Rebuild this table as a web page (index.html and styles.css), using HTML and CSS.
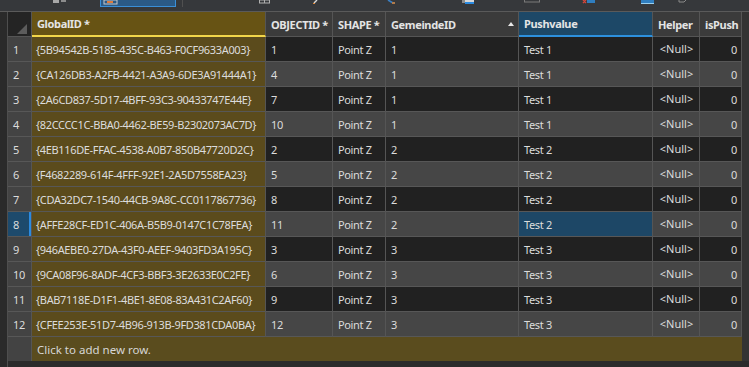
FILE: index.html
```html
<!DOCTYPE html>
<html>

<head>
  <meta charset="utf-8" />
  <title>Attributes - Gemeinden</title>
  <link rel="stylesheet" href="styles.css">
</head>

<body>
  <div class="toolbar">
    <svg class="tool t-add" width="16" height="5"><rect x="2" y="0" width="6" height="3" fill="#a8a8a8"/><rect x="10" y="0" width="5" height="2" fill="#8c8c8c"/></svg>
    <div class="tool-btn active">
      <svg width="16" height="6"><rect x="1" y="0" width="13" height="4" fill="none" stroke="#c8c8c8" stroke-width="1"/><rect x="4" y="1" width="6" height="2" fill="#e07a3a"/></svg>
    </div>
    <span class="sep"></span>
    <svg class="tool t-grid" width="11" height="5"><rect x="0.5" y="0" width="10" height="3" fill="none" stroke="#b0b0b0"/><line x1="5.5" y1="0" x2="5.5" y2="3" stroke="#b0b0b0"/></svg>
    <svg class="tool t-pen" width="5" height="5"><line x1="4" y1="0" x2="1" y2="3" stroke="#d8d8d8" stroke-width="1.4"/><rect x="0" y="3" width="2" height="1" fill="#e08a3a"/></svg>
    <svg class="tool t-zoom" width="11" height="5"><line x1="3" y1="0" x2="8" y2="3" stroke="#3a7fc2" stroke-width="1.6"/><rect x="7" y="2" width="3" height="2" fill="#b07a4a"/></svg>
    <svg class="tool t-sel" width="12" height="5"><rect x="0" y="0" width="3" height="3" fill="#8a8a8a"/><rect x="3" y="0" width="9" height="3" fill="#d8d8d8"/><rect x="3" y="2" width="9" height="2" fill="#2a8ae0"/></svg>
    <svg class="tool t-clear" width="16" height="5"><rect x="0.5" y="-1" width="15" height="3" fill="none" stroke="#7a7a7a"/></svg>
    <svg class="tool t-del" width="13" height="5"><rect x="5" y="0" width="8" height="3" fill="#2f7ec0"/><path d="M1 0 L4 3 M4 0 L1 3" stroke="#d4463a" stroke-width="1.4"/></svg>
    <svg class="tool t-copy" width="14" height="5"><rect x="0" y="0" width="13" height="3" fill="#2f7ec0"/><rect x="0" y="3" width="13" height="1" fill="#9ad0f0"/></svg>
    <svg class="tool t-undo" width="9" height="5"><path d="M1 0 L1 2 L6 2 L8 0" fill="none" stroke="#8a8a8a"/></svg>
  </div>

  <div class="view">
    <div class="gutter"></div>
    <div class="grid">
      <div class="row head">
        <div class="cell corner"><span class="corner-mark"></span></div>
        <div class="cell hcell picked">GlobalID *</div>
        <div class="cell hcell">OBJECTID *</div>
        <div class="cell hcell">SHAPE *</div>
        <div class="cell hcell sorted">GemeindeID <span class="sort-up"></span></div>
        <div class="cell hcell current">Pushvalue</div>
        <div class="cell hcell">Helper</div>
        <div class="cell hcell">isPush</div>
      </div>
      <div id="rows"></div>
      <div class="row add-row">
        <div class="cell num"></div>
        <div class="cell add-cell">Click to add new row.</div>
      </div>
    </div>
    <div class="vscroll"></div>
  </div>
  <div class="footer"><div class="gutter"></div></div>

  <script>
    const records = [
      ['{5B94542B-5185-435C-B463-F0CF9633A003}', 1, 1, 'Test 1'],
      ['{CA126DB3-A2FB-4421-A3A9-6DE3A91444A1}', 4, 1, 'Test 1'],
      ['{2A6CD837-5D17-4BFF-93C3-90433747E44E}', 7, 1, 'Test 1'],
      ['{82CCCC1C-BBA0-4462-BE59-B2302073AC7D}', 10, 1, 'Test 1'],
      ['{4EB116DE-FFAC-4538-A0B7-850B47720D2C}', 2, 2, 'Test 2'],
      ['{F4682289-614F-4FFF-92E1-2A5D7558EA23}', 5, 2, 'Test 2'],
      ['{CDA32DC7-1540-44CB-9A8C-CC0117867736}', 8, 2, 'Test 2'],
      ['{AFFE28CF-ED1C-406A-B5B9-0147C1C78FEA}', 11, 2, 'Test 2'],
      ['{946AEBE0-27DA-43F0-AEEF-9403FD3A195C}', 3, 3, 'Test 3'],
      ['{9CA08F96-8ADF-4CF3-BBF3-3E2633E0C2FE}', 6, 3, 'Test 3'],
      ['{BAB7118E-D1F1-4BE1-8E08-83A431C2AF60}', 9, 3, 'Test 3'],
      ['{CFEE253E-51D7-4B96-913B-9FD381CDA0BA}', 12, 3, 'Test 3']
    ];
    const activeRow = 8;
    const holder = document.getElementById('rows');

    records.forEach((rec, i) => {
      const n = i + 1;
      const row = document.createElement('div');
      row.className = 'row ' + (n % 2 ? 'odd' : 'even') + (n === activeRow ? ' active' : '');
      row.innerHTML =
        `<div class="cell num">${n}</div>` +
        `<div class="cell gid">${rec[0]}</div>` +
        `<div class="cell">${rec[1]}</div>` +
        `<div class="cell">Point Z</div>` +
        `<div class="cell">${rec[2]}</div>` +
        `<div class="cell push">${rec[3]}</div>` +
        `<div class="cell null">&lt;Null&gt;</div>` +
        `<div class="cell right">0</div>`;
      holder.appendChild(row);
    });
  </script>
</body>

</html>
```

FILE: styles.css
```css
html,
body {
  margin: 0;
  padding: 0;
}

body {
  width: 749px;
  height: 367px;
  overflow: hidden;
  background-color: #2b2b2b;
  font-family: "Noto Sans", "Open Sans", sans-serif;
  font-size: 11px;
  letter-spacing: -0.35px;
  color: #dcdcdc;
}

/* ribbon strip, cut off at the top */
.toolbar {
  display: flex;
  align-items: flex-start;
  height: 11px;
  background-color: #36383b;
  border-bottom: 1px solid #5a5a5a;
}

.tool {
  display: block;
  flex: none;
}

.t-add { margin-left: 51px; }
.t-grid { margin-left: 76px; }
.t-pen { margin-left: 43px; }
.t-zoom { margin-left: 67px; }
.t-sel { margin-left: 66px; }
.t-clear { margin-left: 50px; }
.t-del { margin-left: 42px; }
.t-copy { margin-left: 46px; }
.t-undo { margin-left: 23px; }

.tool-btn {
  margin-left: 33px;
  width: 72px;
  height: 6px;
  background-color: #2b5a86;
  border: 1px solid #3a8fd8;
  border-top: 0;
  padding-left: 2px;
}

.tool-btn svg {
  display: block;
}

.sep {
  margin-left: 6px;
  width: 1px;
  height: 7px;
  background-color: #505050;
}

/* table view */
.view {
  display: flex;
}

.gutter {
  width: 7px;
  flex: none;
  background-color: #2a2a2a;
  border-right: 1px solid #4e4e4e;
}

.grid {
  width: 734px;
  flex: none;
}

.vscroll {
  width: 7px;
  flex: none;
  background-color: #333333;
}

.row {
  display: grid;
  grid-template-columns: 24px 234px 67px 53px 133px 134px 47px 42px;
  height: 25px;
}

.cell {
  box-sizing: border-box;
  display: flex;
  align-items: center;
  padding: 0 0 0 5px;
  border-right: 1px solid #555555;
  border-bottom: 1px solid #575757;
  white-space: nowrap;
  overflow: hidden;
}

.odd .cell {
  background-color: #212121;
}

.even .cell {
  background-color: #464646;
}

.row .num {
  background-color: #434343;
  padding-left: 5px;
}

.row .gid {
  background-color: #5b4b1c;
  padding-left: 4px;
}

.row .null {
  justify-content: center;
  padding: 0 0 1px 1px;
  letter-spacing: 0;
}

.row .right {
  justify-content: flex-end;
  padding: 0 4px 0 0;
}

.active .num {
  background-color: #1d4a6c;
  box-shadow: inset -2px 0 0 #2b8be0;
}

.active .push {
  background-color: #1d4766;
}

/* header */
.head .cell {
  background-color: #3b3b3b;
  border-bottom: 1px solid #555555;
  font-weight: bold;
  color: #e4e4e4;
}

.head .corner {
  background-color: #242424;
  position: relative;
}

.corner-mark {
  position: absolute;
  right: 4px;
  bottom: 2px;
  width: 0;
  height: 0;
  border-left: 10px solid transparent;
  border-bottom: 10px solid #5c5c5c;
}

.head .picked {
  background-color: #675314;
  border-bottom: 2px solid #f2d64a;
}

.head .current {
  background-color: #1d4867;
  border-bottom: 2px solid #2d90dd;
}

.head .sorted {
  position: relative;
}

.sort-up {
  position: absolute;
  right: 4px;
  top: 10px;
  width: 0;
  height: 0;
  border-left: 3px solid transparent;
  border-right: 3px solid transparent;
  border-bottom: 4px solid #e8e8e8;
}

/* new row line */
.add-row {
  grid-template-columns: 24px 710px;
  height: 24px;
}

.add-row .num {
  border-bottom: 0;
}

.add-row .add-cell {
  background-color: #5a4c1e;
  border: 0;
  padding-left: 5px;
  font-size: 11.5px;
  letter-spacing: 0;
  color: #d6d6d6;
}

.footer {
  display: flex;
  height: 6px;
}

.footer .gutter {
  height: 6px;
}
```
